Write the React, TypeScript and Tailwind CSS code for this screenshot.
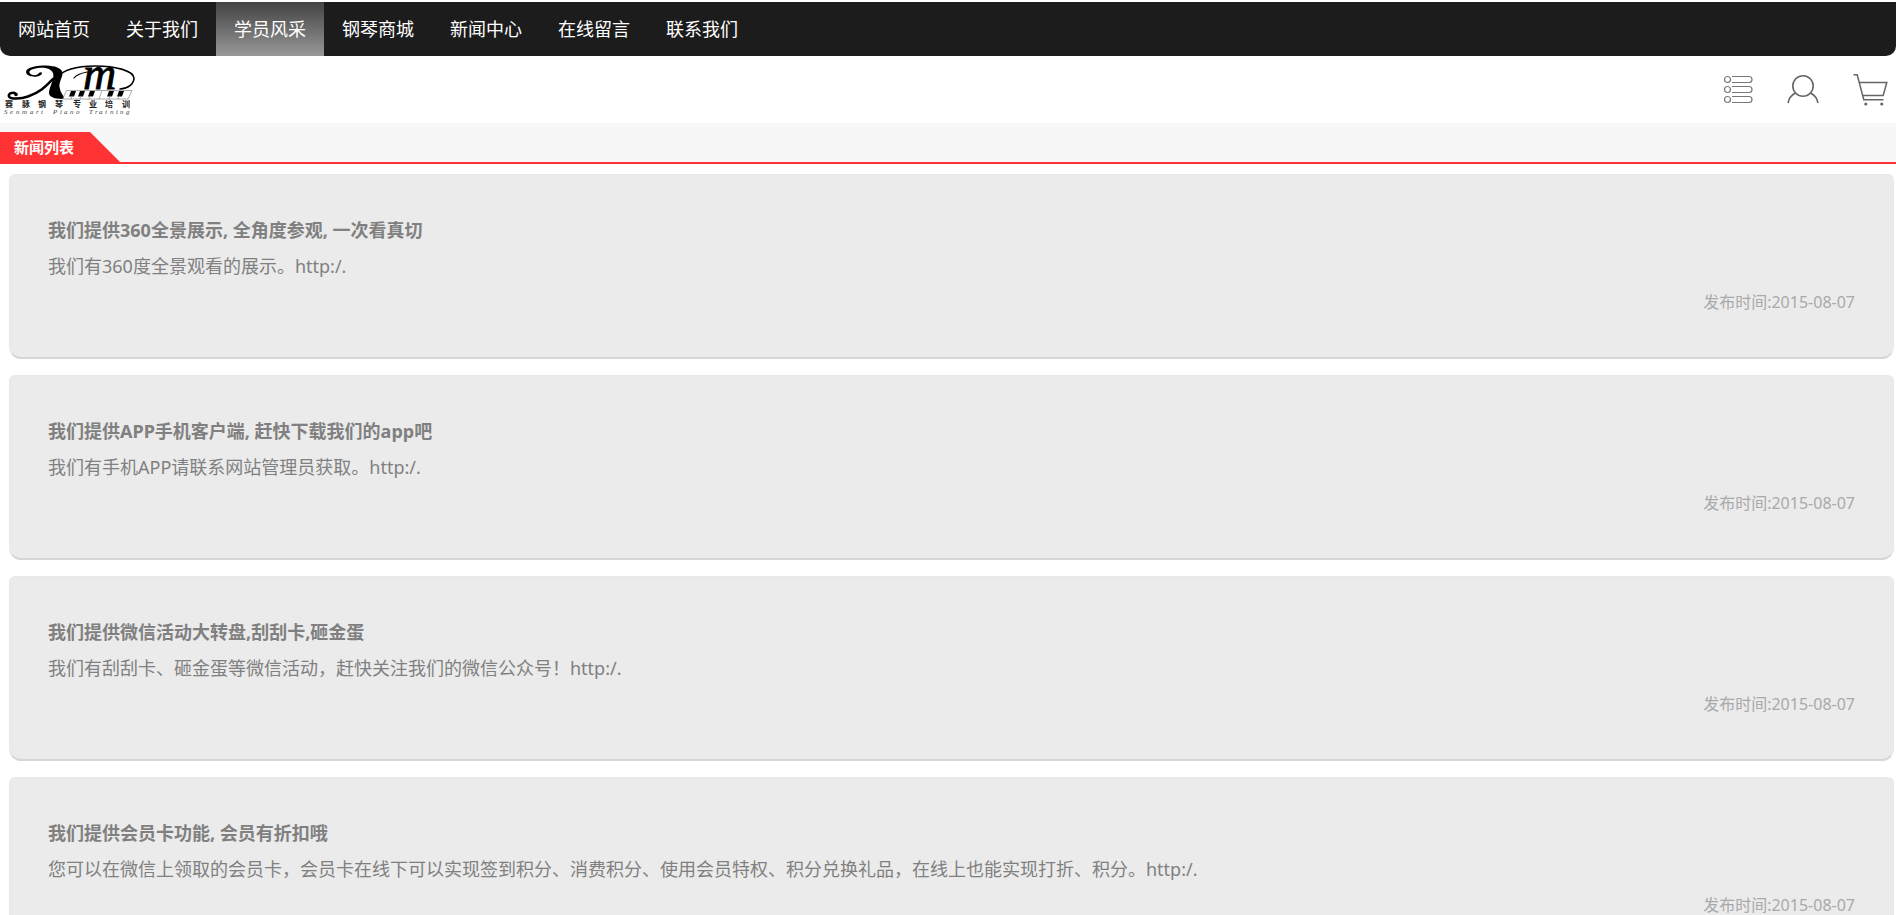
import React from 'react'

const navItems = [
  { name: '网站首页' },
  { name: '关于我们' },
  { name: '学员风采', active: true },
  { name: '钢琴商城' },
  { name: '新闻中心' },
  { name: '在线留言' },
  { name: '联系我们' },
]

const newsData = [
  {
    title: '我们提供360全景展示, 全角度参观, 一次看真切',
    story: '我们有360度全景观看的展示。http:/.',
    date: '2015-08-07',
  },
  {
    title: '我们提供APP手机客户端, 赶快下载我们的app吧',
    story: '我们有手机APP请联系网站管理员获取。http:/.',
    date: '2015-08-07',
  },
  {
    title: '我们提供微信活动大转盘,刮刮卡,砸金蛋',
    story: '我们有刮刮卡、砸金蛋等微信活动，赶快关注我们的微信公众号！http:/.',
    date: '2015-08-07',
  },
  {
    title: '我们提供会员卡功能, 会员有折扣哦',
    story:
      '您可以在微信上领取的会员卡，会员卡在线下可以实现签到积分、消费积分、使用会员特权、积分兑换礼品，在线上也能实现打折、积分。http:/.',
    date: '2015-08-07',
  },
]

const App = () => {
  return (
    <div className="w-full bg-white pt-0.5 font-['Noto_Sans','Noto_Sans_CJK_SC',sans-serif]">
      <Nav />
      <Header />
      <SectionTitle name="新闻列表" />
      <main className="mt-2.5 flex flex-col gap-4 pl-[9px] pr-0.5">
        {newsData.map((item: any, index: number) => {
          return <SingleNews item={item} key={index} />
        })}
      </main>
    </div>
  )
}

export default App

const Nav = () => {
  return (
    <nav className="flex h-[54px] overflow-hidden rounded-b-[10px] bg-[#1c1c1c]">
      {navItems.map((item: any, index: number) => {
        return (
          <a
            href="#"
            key={index}
            className={`flex items-center px-[18px] text-lg text-white ${
              item.active ? 'bg-linear-to-b from-[#444444] to-[#999999]' : ''
            }`}
          >
            {item.name}
          </a>
        )
      })}
    </nav>
  )
}

const Header = () => {
  return (
    <header className="flex h-[67px] items-center justify-between pl-[3px] pr-2">
      <a href="#" aria-label="首页">
        <Logo />
      </a>
      <div className="flex items-center gap-[34px]">
        <a href="#" aria-label="分类">
          <ListIcon />
        </a>
        <a href="#" aria-label="会员">
          <UserIcon />
        </a>
        <a href="#" aria-label="购物车">
          <CartIcon />
        </a>
      </div>
    </header>
  )
}

const SectionTitle = ({ name }: any) => {
  return (
    <div className="border-b-2 border-[#ff3333] bg-[#f7f7f7] pt-[9px]">
      <h2 className="flex h-[30px] w-[120px] items-center bg-[#ff3333] pl-[14px] text-[15px] font-bold text-white [clip-path:polygon(0_0,90px_0,100%_100%,0_100%)]">
        {name}
      </h2>
    </div>
  )
}

const SingleNews = ({ item }: any) => {
  const { title, story, date } = item

  return (
    <article className="flex flex-col rounded-t-md rounded-b-xl border border-[#e8e8e8] border-b-2 border-b-[#d6d6d6] bg-[#ebebeb] px-[38px] py-[37px] text-[#808080]">
      <h3 className="text-lg/9 font-bold">{title}</h3>
      <p className="text-lg/9">{story}</p>
      <p className="text-right text-base/9 text-[#a9a9a9]">发布时间:{date}</p>
    </article>
  )
}

const ListIcon = () => {
  return (
    <svg className="h-8 w-[29px]" viewBox="0 0 29 32" fill="none" stroke="#777" strokeWidth="1.2">
      {[5, 15, 25].map((y) => (
        <g key={y}>
          <circle cx="3.500" cy={y + 0.5} r="3" />
          <path d={`M8 ${y - 2.5}H25a3 3 0 0 1 0 6H8`} />
        </g>
      ))}
    </svg>
  )
}

const UserIcon = () => {
  return (
    <svg className="h-8 w-8" viewBox="0 0 32 32" fill="none" stroke="#666" strokeWidth="1.6">
      <circle cx="16" cy="12" r="10.200" />
      <path d="M8.500 19C4.500 21 1.800 25 1 29M23.500 19c4 2 6.700 6 7.500 10" />
    </svg>
  )
}

const CartIcon = () => {
  return (
    <svg className="h-8 w-[35px]" viewBox="0 0 35 32" fill="none" stroke="#666" strokeWidth="1.5">
      <path d="M0.500 0.800H4.200L10.800 25.800H30.500" />
      <path d="M6.300 8.500H33.800L30.200 21.500H9.600" />
      <circle cx="12.800" cy="30" r="1.600" fill="#666" stroke="none" />
      <circle cx="28.800" cy="30" r="1.600" fill="#666" stroke="none" />
    </svg>
  )
}

const Logo = () => {
  return (
    <svg className="h-[50px] w-[134px] overflow-visible" viewBox="0 0 134 50" fill="none" stroke="#000" strokeLinecap="round">
      {/* upper curl running into the heavy stroke */}
      <path
        d="M39 8.500C38 12.500 24 13.500 23 7C23 2 34 0.500 43 0.500C53 0.500 60 4 59.500 9C59 14 55 18 57 24C58 29 61 31 62 34C54 34 46 33 46 28C46 22 52 14 50 8C48 3 41 2 35 3C28 4 25 6 27 8.500C30 11.500 35 10 36 8C37 7 39 7 39 8.500Z"
        fill="#000"
        stroke="none"
      />
      {/* lower curl, then the oval over the keys */}
      <path d="M13 29C10 26.500 5 28.500 6 31.500C7 34 17 34.500 25 31.500C38 27 44 20 50 14" strokeWidth="2.500" />
      <path d="M53 13C60 5 72 1 92 1C114 1 130 6 131 13C131 19 125 23.500 117 24" strokeWidth="1.600" />
      <circle cx="13" cy="29.500" r="1.800" fill="#000" stroke="none" />
      <text
        x="80"
        y="24"
        fill="#000"
        stroke="#000"
        strokeWidth="0.800"
        className="font-['Liberation_Serif',serif] text-[46px] leading-none italic"
      >
        m
      </text>
      <path d="M71 13C74 9 79 8 84 7" strokeWidth="1.200" />
      {/* piano keys */}
      <path d="M64 25.500H129L125 34H60Z" fill="#fff" stroke="#888" strokeWidth="0.700" />
      {[68, 77, 87, 106, 116].map((x) => (
        <path key={x} d={`M${x} 26h5l-2 5.500h-5z`} fill="#000" stroke="none" />
      ))}
      <path d="M99 25.500L96 34" stroke="#888" strokeWidth="0.700" />
      {[69, 78, 87, 107, 116].map((x) => (
        <path key={x} d={`M${x} 31l-1 3`} stroke="#888" strokeWidth="0.700" />
      ))}
      <text
        x="2 19 35 52 70 86 102 119"
        y="42"
        fill="#222"
        stroke="none"
        className="font-['Noto_Sans_CJK_SC',sans-serif] text-[8px] font-bold"
      >
        赛脉钢琴专业培训
      </text>
      <text
        x="1 7 13 19 27 33 38 44 50 57 61 67 73 79 86 92 96 102 107 113 117 123"
        y="49"
        fill="#444"
        stroke="none"
        className="font-['Liberation_Serif',serif] text-[7px] italic"
      >
        Senmart Piano Training
      </text>
    </svg>
  )
}
